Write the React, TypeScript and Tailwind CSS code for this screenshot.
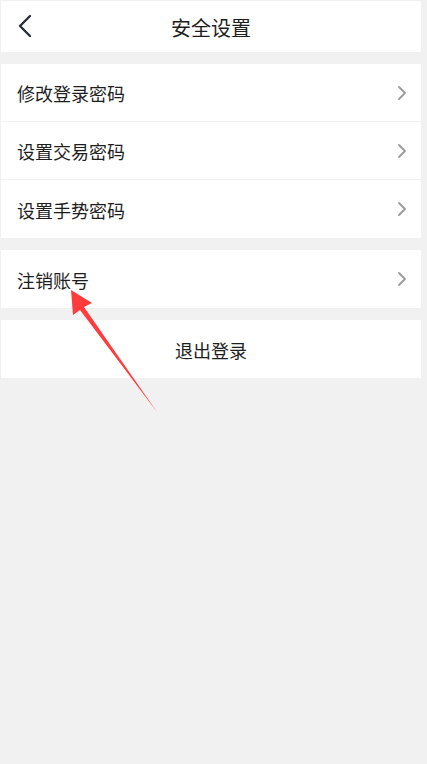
const font = { fontFamily: '"Noto Sans CJK SC", "Noto Sans", sans-serif' }

function Chevron() {
  return (
    <svg width="10" height="16" viewBox="0 0 10 16" className="shrink-0">
      <path d="M2 2 L8 8 L2 14" fill="none" stroke="#9a9a9a" strokeWidth="1.8" strokeLinecap="round" strokeLinejoin="round" />
    </svg>
  )
}

function Row({ label, divider }: { label: string; divider?: boolean }) {
  return (
    <div className={`flex items-center justify-between h-[58px] pl-[16px] pr-[14px] ${divider ? 'border-b border-[#f2f2f2]' : ''}`}>
      <span className="text-[18px] text-[#1e1e1e] pt-[2px]">{label}</span>
      <Chevron />
    </div>
  )
}

export default function App() {
  return (
    <div className="w-[427px] h-[764px] bg-[#f1f1f1] pt-px pl-px pr-[6px] relative overflow-hidden" style={font}>
      {/* Header */}
      <div className="relative flex items-center justify-center h-[51px] bg-white">
        <svg width="16" height="24" viewBox="0 0 16 24" className="absolute left-[16px] top-[13px]">
          <path d="M13 2 L3 12 L13 22" fill="none" stroke="#2a2f3a" strokeWidth="2.4" strokeLinecap="round" strokeLinejoin="round" />
        </svg>
        <span className="text-[20px] text-[#1e1e1e] pt-[2px]">安全设置</span>
      </div>

      <div className="mt-[12px] bg-white">
        <Row label="修改登录密码" divider />
        <Row label="设置交易密码" divider />
        <Row label="设置手势密码" />
      </div>

      <div className="mt-[12px] bg-white">
        <Row label="注销账号" />
      </div>

      <div className="mt-[12px] bg-white h-[58px] flex items-center justify-center">
        <span className="text-[18px] text-[#1e1e1e] pt-[3px]">退出登录</span>
      </div>

      {/* annotation arrow */}
      <svg width="427" height="764" className="absolute left-0 top-0 pointer-events-none">
        <polygon points="71,290 92,303 84,307 157,412 80,310 73,315" fill="#ff3b3b" />
      </svg>
    </div>
  )
}
